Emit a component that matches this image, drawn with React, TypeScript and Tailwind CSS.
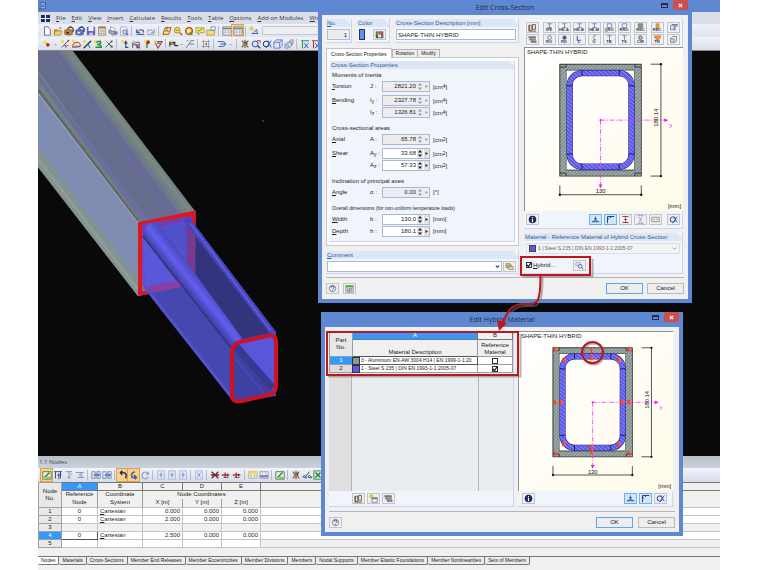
import React from "react";

/* ---------- small toolbar glyphs, drawn on a 12 x 12 grid ---------- */
const GLYPHS: Record<string, React.ReactNode> = {
  page: <path d="M3 1h4l3 3v7H3z" fill="#fff" stroke="#555a66" />,
  open: (
    <g>
      <path d="M1 4h4l1 1h4v5H1z" fill="#c9922c" />
      <path d="M3 6h8l-2 5H1z" fill="#f4cd5c" stroke="#9c7422" strokeWidth=".6" />
      <path d="M7 3q2-2 3 0" fill="none" stroke="#2b5bb5" />
    </g>
  ),
  boxTan: (
    <g>
      <path d="M1 5l4-1 5 1v5l-4 1-5-1z" fill="#c58a36" stroke="#4d3514" strokeWidth=".7" />
      <path d="M4 3l4-2 3 2v4" fill="none" stroke="#5a3d12" strokeWidth="1.5" />
      <path d="M3 7h3v2H3z" fill="#3a2a16" />
    </g>
  ),
  boxBlue: (
    <g>
      <path d="M1 5l4-1 5 1v5l-4 1-5-1z" fill="#5c7bcb" stroke="#1d2c63" strokeWidth=".7" />
      <path d="M4 3l4-2 3 2v4" fill="none" stroke="#24376f" strokeWidth="1.5" />
      <path d="M3 7h3v2H3z" fill="#e6ecff" />
    </g>
  ),
  save: (
    <g>
      <path d="M1 1h10v10H1z" fill="#6a62b8" />
      <path d="M3 1h6v5H3z" fill="#f3f3fb" />
      <path d="M4 8h4v3H4z" fill="#cfd0e8" />
    </g>
  ),
  report: (
    <g>
      <path d="M2 1h8v10H2z" fill="#f5efe2" stroke="#7b654b" strokeWidth=".8" />
      <path d="M2 1h8v2H2z" fill="#a97d4a" />
      <path d="M3 5h6M3 7h6M3 9h6" stroke="#90887c" strokeWidth=".8" />
    </g>
  ),
  print: (
    <g>
      <path d="M3 1l5 2v4L3 5z" fill="#fff" stroke="#666" strokeWidth=".6" />
      <path d="M1 5l4 1 6 1v3l-5 1-5-3z" fill="#a6a9b6" stroke="#555" strokeWidth=".6" />
      <path d="M7 9l3-1" stroke="#6b59c7" strokeWidth="1.5" />
    </g>
  ),
  preview: (
    <g>
      <path d="M2 1h6l2 2v8H2z" fill="#f2f4fa" stroke="#7a7f8d" strokeWidth=".7" />
      <circle cx="7" cy="7" r="2.5" fill="#c9dcf8" stroke="#4b628d" />
      <path d="M9 9l2 2" stroke="#4b628d" strokeWidth="1.4" />
    </g>
  ),
  undo: <path d="M2 4v4h4M2 8q3-5 8-3v3M2 10h9" fill="none" stroke="#2e4b86" strokeWidth="1.2" />,
  redo: <path d="M10 4v4H6M10 8Q7 3 2 5v3M1 10h9" fill="none" stroke="#8d9bb7" strokeWidth="1.2" />,
  plane: (
    <g>
      <path d="M4 2h7L8 10H1z" fill="#f7ef62" stroke="#b0292a" />
      <path d="M6 1v5M3 6h6" stroke="#333" strokeWidth=".7" />
    </g>
  ),
  lens: (
    <g>
      <circle cx="5" cy="5" r="3.5" fill="#f5e34b" stroke="#ad7c1e" />
      <path d="M8 8l3 3" stroke="#b03434" strokeWidth="1.5" />
      <path d="M3 5h4" stroke="#5a6cc0" />
    </g>
  ),
  wheel: (
    <g>
      <circle cx="6" cy="6" r="4" fill="#f6e14e" stroke="#c03a34" strokeWidth="1.6" />
      <path d="M6 6l4 5" stroke="#31904a" strokeWidth="1.4" />
      <circle cx="6" cy="6" r="1.3" fill="#fff" />
    </g>
  ),
  note: (
    <g>
      <path d="M1 2h10v6H6l-2 3V8H1z" fill="#f4ec5a" stroke="#867e24" strokeWidth=".7" />
      <path d="M3 5l2 1 4-3" fill="none" stroke="#444" strokeWidth=".8" />
    </g>
  ),
  folder: (
    <g>
      <path d="M1 5h9v6H1z" fill="#f4dd6c" stroke="#8d7a2c" strokeWidth=".7" />
      <path d="M6 1h5v4H6z" fill="#fff" stroke="#4968ac" strokeWidth=".8" />
    </g>
  ),
  table: (
    <g>
      <path d="M1 1h10v10H1z" fill="#f6f7fa" stroke="#6b6f7c" strokeWidth=".9" />
      <path d="M1 3h10" stroke="#727a91" strokeWidth="1.8" />
      <path d="M1 6h10M1 8h10M4 3v8M8 3v8" stroke="#9499a8" strokeWidth=".6" />
    </g>
  ),
  star: (
    <g>
      <circle cx="3" cy="3" r="2" fill="#f2e238" stroke="#b29a22" strokeWidth=".5" />
      <path d="M3 9h8M5 9l4-5 1 5" fill="none" stroke="#3c5690" />
    </g>
  ),
  node: (
    <g>
      <circle cx="4" cy="4" r="2" fill="#f2e238" />
      <circle cx="7" cy="7" r="2.2" fill="#c32323" />
    </g>
  ),
  line: (
    <g>
      <circle cx="3" cy="3" r="2" fill="#efe23c" />
      <path d="M2 10l8-8" stroke="#3b5c9c" strokeWidth="1.2" />
      <path d="M7 7v4M5 8h5" stroke="#bb2c2c" strokeWidth=".9" />
      <circle cx="10" cy="2" r="1" fill="#b72222" />
    </g>
  ),
  arc: (
    <g>
      <circle cx="3" cy="3" r="2" fill="#efe23c" />
      <path d="M2 10q0-6 5-6t4 5z" fill="none" stroke="#bb2c2c" strokeWidth="1.2" />
      <path d="M4 8h6v2H4z" fill="#6c8a4c" />
    </g>
  ),
  member: (
    <g>
      <circle cx="3" cy="3" r="2" fill="#efe23c" />
      <path d="M2 11l9-9" stroke="#273d74" strokeWidth="1.8" />
      <path d="M7 6l3 5" stroke="#3f8e4e" strokeWidth="1.3" />
    </g>
  ),
  green: (
    <g>
      <circle cx="3" cy="3" r="2" fill="#efe23c" />
      <path d="M4 4q6-3 5 1l-4 2q5-1 5 3H3" fill="none" stroke="#2b8e3c" strokeWidth="1.8" />
    </g>
  ),
  cross: (
    <g>
      <path d="M2 2l8 8M10 2l-8 8" stroke="#3b567f" strokeWidth="1.1" />
      <circle cx="3" cy="3" r="1.5" fill="#efe23c" />
      <circle cx="9" cy="9" r="1.5" fill="#3b8c45" />
      <circle cx="9" cy="3" r="1.2" fill="#b62b2b" />
    </g>
  ),
  support: (
    <g>
      <circle cx="3" cy="3" r="2" fill="#efe23c" />
      <path d="M7 2v8M5 5h4M6 10h4" stroke="#2d56a2" strokeWidth="1.4" />
      <circle cx="7" cy="4" r="1.3" fill="#b72222" />
    </g>
  ),
  frame: (
    <g>
      <path d="M2 11V4h8v7M2 4l8 7M2 7h8" fill="none" stroke="#365194" />
      <path d="M7 6l4 5H6z" fill="#b33a48" />
      <circle cx="3" cy="3" r="1.8" fill="#efe23c" />
    </g>
  ),
  load: (
    <g>
      <path d="M6 5v6" stroke="#24913b" strokeWidth="1.6" />
      <circle cx="7" cy="4" r="2.4" fill="#b3272d" />
      <circle cx="4" cy="3" r="1.8" fill="#efe23c" />
    </g>
  ),
  loads: (
    <g>
      <path d="M2 3h9L6 11z" fill="none" stroke="#aa3b3b" strokeWidth="1.3" />
      <path d="M5 5h4" stroke="#3b65b5" strokeWidth="1.6" />
      <circle cx="3" cy="3" r="1.8" fill="#efe23c" />
    </g>
  ),
  dims: (
    <g>
      <path d="M1 9V4h6v4h4M1 6h5" fill="none" stroke="#2a2d33" strokeWidth="1.4" />
      <circle cx="3" cy="3" r="1.6" fill="#e7db49" />
    </g>
  ),
  guide: <path d="M1 11l4-5 2-4h4M5 6h6M4 2H2" fill="none" stroke="#697794" strokeWidth="1.1" />,
  grid: (
    <g>
      <path d="M3 1v10M9 1v10M1 3h10M1 9h10" stroke="#7c8493" strokeWidth=".8" />
      <path d="M5 6l2-2v4z" fill="#a33" />
    </g>
  ),
  route: <path d="M1 3h5q4 0 4 3t-4 3H2M4 6h7" fill="none" stroke="#49649f" strokeWidth="1.2" />,
  bug: (
    <g>
      <path d="M2 2l8 8M10 2l-8 8M6 1v10" stroke="#77523a" strokeWidth="1.4" />
      <circle cx="6" cy="6" r="3" fill="#9d8352" />
      <path d="M5 4h3v3" fill="none" stroke="#3d352b" />
    </g>
  ),
  zoom: (
    <g>
      <circle cx="5" cy="6" r="3.5" fill="#dbe7fb" stroke="#33559d" strokeWidth="1.2" />
      <path d="M8 8l3 3" stroke="#33456f" strokeWidth="1.6" />
      <path d="M7 2h4v3" fill="none" stroke="#bb3131" strokeWidth="1.1" />
    </g>
  ),
  zoomX: (
    <g>
      <circle cx="5" cy="6" r="3.5" fill="#dbe7fb" stroke="#25365f" strokeWidth="1.2" />
      <path d="M7 2l4 8M11 2L5 11" stroke="#2f55c4" strokeWidth="1.2" />
    </g>
  ),
  cube: (
    <g>
      <path d="M1 4h7v7H1zM1 4l3-3h7v7l-3 3M8 4l3-3" fill="#dbe6fa" stroke="#4c68b4" strokeWidth=".9" />
    </g>
  ),
  cubes: <path d="M1 7h4v4H1zM1 7l3-3h5v4l-3 3M6 4l2-3h3v4l-2 3" fill="#cdd7ea" stroke="#6e7da6" strokeWidth=".9" />,
  axis: (
    <g>
      <path d="M1 2h10M3 2v9" stroke="#2b9a45" strokeWidth="1.3" />
      <path d="M5 5l5 6M10 5l-5 6" stroke="#3a57bd" strokeWidth="1.2" />
    </g>
  ),
  axisR: (
    <g>
      <path d="M1 2h10M3 2v9" stroke="#b83434" strokeWidth="1.3" />
      <path d="M5 5l5 6M10 5l-5 6" stroke="#3a57bd" strokeWidth="1.2" />
    </g>
  ),
  tableEdit: (
    <g>
      <path d="M1 2h10v9H1z" fill="#eef4e4" stroke="#4b7245" />
      <path d="M3 9l6-6" stroke="#398a3f" strokeWidth="2" />
      <path d="M5 8h5v3H5z" fill="#8fbf68" />
    </g>
  ),
  cols: <path d="M1 2h10M3 2v8M9 2v8M5 6h5M7 4v7" fill="none" stroke="#40537f" strokeWidth="1.2" />,
  colsDown: <path d="M2 2h8M6 2v8M4 8l2 2 2-2M8 5h2" fill="none" stroke="#8190b0" strokeWidth="1.1" />,
  colsWide: <path d="M1 3h9M3 9h8M10 3L5 6h3v3" fill="none" stroke="#8190b0" strokeWidth="1.1" />,
  arrows: (
    <g>
      <path d="M1 2h4v8H1zM7 2h4v8H7z" fill="#dfe8f8" stroke="#53698d" strokeWidth=".8" />
      <path d="M3 6h7M8 4l2 2-2 2" fill="none" stroke="#2c55b8" strokeWidth="1.2" />
    </g>
  ),
  turnL: <path d="M9 10q3-6-3-7H3M5 1L3 3l2 3" fill="none" stroke="#27345c" strokeWidth="1.8" />,
  turnR: <path d="M7 2Q1 4 4 9h4M6 6l3 3-2 2" fill="none" stroke="#3b59a8" strokeWidth="1.8" />,
  refresh: <path d="M10 5a4 4 0 1 0 0 3M10 2v3H7" fill="none" stroke="#8a9bb9" strokeWidth="1.3" />,
  cell: (
    <g>
      <path d="M2 1h8v10H2z" fill="#e4ebf8" stroke="#9fb0cf" />
      <path d="M6 3v6M4 6h4" stroke="#7791c4" strokeWidth="1.2" />
    </g>
  ),
  cellX: (
    <g>
      <path d="M2 1h8v10H2z" fill="#e4ebf8" stroke="#9fb0cf" />
      <path d="M4 3l4 6M8 3L4 9" stroke="#7791c4" strokeWidth="1" />
    </g>
  ),
  del: <path d="M2 2l8 8M10 2l-8 8M1 6h10" stroke="#7a2730" strokeWidth="1.7" />,
  arrowR: (
    <g>
      <path d="M1 6h9M5 3v6" stroke="#b72e34" strokeWidth="1.6" />
      <path d="M8 4v4M3 9h6" stroke="#333c4c" strokeWidth=".9" />
    </g>
  ),
  yellowTable: (
    <g>
      <path d="M1 2h10v8H1z" fill="#f7f7ef" stroke="#9a9a7b" strokeWidth=".8" />
      <path d="M1 2h10v3H1z" fill="#eede4c" />
      <path d="M4 5v5M8 5v5M1 7h10" stroke="#999" strokeWidth=".6" />
    </g>
  ),
  blueTable: (
    <g>
      <path d="M1 2h10v8H1z" fill="#e9ecfa" stroke="#8589b0" strokeWidth=".8" />
      <path d="M1 6h10v3H1z" fill="#8587cf" />
      <path d="M4 2v8M8 2v8" stroke="#999" strokeWidth=".6" />
    </g>
  ),
  appMark: (
    <g>
      <path d="M3 1h7v8H3z" fill="#9db6e2" stroke="#2d518f" />
      <path d="M4 4h5M4 6h5" stroke="#2d518f" />
      <path d="M1 8h4v3H1z" fill="#3f7f6a" />
    </g>
  ),
  books: (
    <g>
      <path d="M1 3h4v7H1zM6 2h4v7H6z" fill="#e9dfd0" stroke="#3d3a3a" strokeWidth=".9" />
      <path d="M2 3v7M1 11h10" stroke="#6d4b2b" />
    </g>
  ),
  glasses: <path d="M1 8q2-3 4 0t-4 0M7 8q2-3 4 0t-4 0M5 7l4-5" fill="none" stroke="#3b4669" strokeWidth="1.2" />,
  excel: (
    <g>
      <path d="M1 1h10v10H1z" fill="#d9efd9" stroke="#2b7c3b" />
      <path d="M3 3l6 6M9 3L3 9" stroke="#24813a" strokeWidth="1.7" />
    </g>
  ),
  shade: (
    <g>
      <path d="M1 2h9v2H1zM2 5h8v2H2zM4 8h7v2H4z" fill="#8b8d94" stroke="#444" strokeWidth=".5" />
      <path d="M6 5h3v2H6z" fill="#d98e36" />
    </g>
  ),
  ibeam: <path d="M3 1h6M3 6h6M6 1v5" stroke="#6178b4" strokeWidth="1" />,
  boxSec: <path d="M3 1h6v5H3z" fill="none" stroke="#6178b4" strokeWidth="1" />,
  ring: <circle cx="6" cy="3.5" r="2.5" fill="none" stroke="#6178b4" strokeWidth="1.2" />,
  disc: <circle cx="6" cy="3.5" r="2.8" fill="#3e5bb2" />,
  angle: <path d="M3 1v6h5" fill="none" stroke="#3e5bb2" strokeWidth="1.4" />,
  channel: <path d="M8 1H5v5h3" fill="none" stroke="#6178b4" strokeWidth="1" />,
  tee: <path d="M3 1h6M6 1v6" stroke="#6178b4" strokeWidth="1" />,
  steel: <path d="M3 1h6v5H3z" fill="#8d9196" stroke="#555" strokeWidth=".7" />,
  steelRing: <circle cx="6" cy="3.5" r="2.500" fill="#b4b7bb" stroke="#555" strokeWidth="1" />,
  wood: <path d="M4 1h4v6H4z" fill="#f0a032" stroke="#bb7318" strokeWidth=".7" />,
  woodTee: <path d="M2 1h8v3H8v3H4V4H2z" fill="#e8993a" stroke="#bb7318" strokeWidth=".6" />,
  stack: (
    <g>
      <path d="M2 3h5v6H2z" fill="#d4dcef" stroke="#53618c" strokeWidth=".8" />
      <path d="M4 2h7v2H8v6" fill="none" stroke="#53618c" strokeWidth="1.1" />
    </g>
  ),
  stack2: (
    <g>
      <path d="M2 5h5v5H2z" fill="#cccfd4" stroke="#666b77" strokeWidth=".8" />
      <path d="M2 5l3-3h5v6l-3 2" fill="none" stroke="#666b77" strokeWidth="1" />
    </g>
  ),
  palette: (
    <g>
      <path d="M1 2h10v9H1z" fill="#57513f" />
      <path d="M2 3h4v4H2z" fill="#58b257" />
      <path d="M6 2h4v4H6z" fill="#df5348" />
      <path d="M4 6h4v4H4z" fill="#f0e3ae" />
      <path d="M8 6h3v4H8z" fill="#5a70c8" />
    </g>
  ),
  help: (
    <g>
      <circle cx="6" cy="6" r="4.3" fill="#eef1f7" stroke="#50607f" strokeWidth=".9" />
      <path d="M4 5q0-2 2-2t2 1.500-2 2.500M6 8.500v1" fill="none" stroke="#26417c" strokeWidth="1.2" />
    </g>
  ),
  calc: (
    <g>
      <path d="M1 2h10v9H1z" fill="#dce8dc" stroke="#5d6f5d" strokeWidth=".7" />
      <path d="M1 2h10v2.500H1z" fill="#58ab4c" />
      <path d="M3 6v4M5 6h2v2H5v2h2M9 6v4" fill="none" stroke="#3d4652" strokeWidth=".8" />
    </g>
  ),
  info: (
    <g>
      <circle cx="6" cy="6" r="5" fill="#1c2a55" />
      <path d="M6 2.500v1.500M6 5v4.500" stroke="#fff" strokeWidth="1.6" />
    </g>
  ),
  stress: <path d="M1 9h10M2 9l4-2 4 2M6 7V2M4 5h4" fill="none" stroke="#2f4f92" strokeWidth="1.2" />,
  corner: <path d="M2 11V2h9M2 5h2M6 2v2" fill="none" stroke="#2b3f70" strokeWidth="1.3" />,
  redI: (
    <g>
      <path d="M2 2h8M2 10h8" stroke="#b03434" strokeWidth="1.6" />
      <path d="M6 3v6M4 6h4" stroke="#444" strokeWidth="1" />
    </g>
  ),
  grayI: <path d="M2 1h8M2 11h8M4 3q4 3 0 6M8 3q-4 3 0 6" fill="none" stroke="#7b8296" strokeWidth="1" />,
  values: <path d="M1 3h10v6H1zM3 6h2M7 6h2" fill="#efe9df" stroke="#827d74" strokeWidth="1" />,
  newItem: (
    <g>
      <path d="M4 5h7v6H4z" fill="#fff" stroke="#555e70" strokeWidth=".9" />
      <path d="M4 5h7v2H4z" fill="#6b7997" />
      <circle cx="3" cy="3" r="2.200" fill="#e9dc35" stroke="#8d8528" strokeWidth=".5" />
    </g>
  ),
  copies: (
    <g>
      <path d="M1 2h6v5H1z" fill="#d9cca0" stroke="#7d714c" strokeWidth=".7" />
      <path d="M3 4h6v4H3z" fill="#cdbd88" stroke="#7d714c" strokeWidth=".7" />
      <path d="M5 6h6v4H5z" fill="#dfd3a8" stroke="#7d714c" strokeWidth=".7" />
    </g>
  ),
  search: (
    <g>
      <path d="M1 2h6v4H1z" fill="#dfe2ea" stroke="#7c8397" strokeWidth=".7" />
      <circle cx="7" cy="7" r="2.500" fill="#cfe0fa" stroke="#3c5fa8" />
      <path d="M9 9l2 2" stroke="#34466f" strokeWidth="1.3" />
    </g>
  ),
};

function Glyph({ name, className = "size-[10px]" }: { name: string; className?: string }) {
  return (
    <svg viewBox="0 0 12 12" className={`${className} shrink-0`} aria-hidden="true">
      {GLYPHS[name]}
    </svg>
  );
}

function Tool({ name, active = false }: { name: string; active?: boolean }) {
  return (
    <button
      aria-label={name}
      className={`flex h-3 w-[11px] shrink-0 items-center justify-center ${
        active ? "bg-[#fbd08a] outline outline-[#d9a352]" : ""
      }`}
    >
      <Glyph name={name} />
    </button>
  );
}

const Sep = () => <span className="mx-[2px] h-[10px] w-px shrink-0 bg-[#b4bac9]" />;

function ToolRow({ items }: { items: string[] }) {
  return (
    <>
      {items.map((item, i) =>
        item === "|" ? <Sep key={i} /> : <Tool key={i} name={item.replace("*", "")} active={item.endsWith("*")} />
      )}
    </>
  );
}

/* ---------- dialog building blocks ---------- */
function PushIcon({
  name,
  caption,
  on = false,
}: {
  name: string;
  caption?: string;
  on?: boolean;
}) {
  return (
    <button
      aria-label={caption ?? name}
      className={`relative flex h-[11px] w-[13px] shrink-0 items-center justify-center border ${
        on ? "border-[#6fb0e8] bg-[#cfe6fb]" : "border-[#c4c4c8] bg-[#f0f0f2]"
      }`}
    >
      <Glyph name={name} className="size-[9px]" />
      {caption && (
        <span className="absolute inset-x-0 bottom-0 text-center text-[4px] leading-[4px] font-bold text-[#333a4c]">
          {caption}
        </span>
      )}
    </button>
  );
}

function Group({
  title,
  className = "",
  children,
}: {
  title: React.ReactNode;
  className?: string;
  children: React.ReactNode;
}) {
  return (
    <fieldset className={`min-w-0 border-r border-b border-[#cdd2f4] bg-[#f0f4fb] ${className}`}>
      <div className="h-2 bg-[#dce6f5] pl-px leading-[8px] text-[#2b5b93] [clip-path:polygon(0_0,calc(100%-5px)_0,100%_5px,100%_100%,0_100%)]">
        {title}
      </div>
      {children}
    </fieldset>
  );
}

function PushButton({ children, primary = false }: { children: React.ReactNode; primary?: boolean }) {
  return (
    <button
      className={`h-[11px] w-[37px] border bg-[#eeeeee] text-center leading-[9px] ${
        primary ? "border-[#5da7ee]" : "border-[#b9b9b9]"
      }`}
    >
      {children}
    </button>
  );
}

function Check({ id, checked = false }: { id: string; checked?: boolean }) {
  return (
    <span className="inline-grid size-[6px] shrink-0">
      <input
        id={id}
        aria-label={id}
        type="checkbox"
        defaultChecked={checked}
        className="peer col-start-1 row-start-1 size-[6px] appearance-none border border-[#333] bg-white"
      />
      <svg
        viewBox="0 0 6 6"
        className="pointer-events-none invisible col-start-1 row-start-1 size-[6px] peer-checked:visible"
      >
        <path d="M1 3l1.500 1.500L5 1" fill="none" stroke="#111" strokeWidth="1.2" />
      </svg>
    </span>
  );
}

function Field({
  label,
  sym,
  sub,
  value,
  unit,
  sup,
  editable = false,
  className = "",
}: {
  label?: string;
  sym: string;
  sub?: string;
  value: string;
  unit: string;
  sup?: string;
  editable?: boolean;
  className?: string;
}) {
  const id = `field-${sym}${sub ?? ""}`;
  return (
    <div className={`flex h-3 items-center ${className}`}>
      <span className="w-[38px] first-letter:underline">{label}</span>
      <label htmlFor={id} className="w-3">
        {sym}
        {sub && <sub className="text-[5px]">{sub}</sub>} :
      </label>
      <span
        className={`flex h-[11px] w-12 items-center border border-[#a9b9d2] ${editable ? "bg-white" : "bg-[#ededef]"}`}
      >
        <input
          id={id}
          defaultValue={value}
          readOnly={!editable}
          className="w-0 min-w-0 flex-1 bg-transparent text-right leading-[9px]"
        />
        <button
          aria-label={`Step ${sym}`}
          className={`ml-px flex h-[9px] w-[6px] items-center justify-center ${editable ? "bg-[#e3e3e6]" : ""}`}
        >
          <svg viewBox="0 0 6 9" className="h-[9px] w-[6px]">
            <path d="M3 1L5 3.500H1zM3 8L5 5.500H1z" fill={editable ? "#222" : "#999"} />
          </svg>
        </button>
        <button
          aria-label={`Choose ${sym}`}
          className={`ml-px flex h-[9px] w-[5px] items-center justify-center ${editable ? "bg-[#e3e3e6]" : ""}`}
        >
          <svg viewBox="0 0 5 9" className="h-[9px] w-[5px]">
            <path d="M1.500 3L4 4.500 1.500 6z" fill={editable ? "#222" : "#999"} />
          </svg>
        </button>
      </span>
      <span className="ml-[3px]">
        [{unit}
        {sup && <span className="align-[1px] text-[5px]">{sup}</span>}]
      </span>
    </div>
  );
}

/* Hybrid cross-section: aluminium box around a rounded steel tube */
function SectionDrawing({ id, marks = false }: { id: string; marks?: boolean }) {
  const markers: [number, number, string][] = [
    [38, 18, "1"], [115, 18, "1"], [76, 20, "1"], [76, 27, "2"],
    [47, 29, "2"], [104, 29, "2"], [38, 73, "1"], [44, 73, "2"],
    [108, 73, "2"], [115, 73, "1"], [47, 117, "2"], [104, 117, "2"],
    [38, 127, "1"], [115, 127, "1"], [76, 120, "2"], [76, 126, "1"],
  ];
  return (
    <svg viewBox="0 0 161 166" className="block h-auto w-full">
      <defs>
        <pattern id={`${id}-alu`} width="2.500" height="2.500" patternUnits="userSpaceOnUse" patternTransform="rotate(45)">
          <rect width="2.500" height="2.500" fill="#9dabaa" />
          <rect width=".8" height="2.500" fill="#71807e" />
        </pattern>
        <pattern id={`${id}-steel`} width="3" height="3" patternUnits="userSpaceOnUse" patternTransform="rotate(-50)">
          <rect width="3" height="3" fill="#5a56f0" />
          <rect width=".9" height="3" fill="#8e8cf8" />
        </pattern>
      </defs>
      <rect x="38.500" y="19.500" width="76.500" height="107.500" fill="none" stroke={`url(#${id}-alu)`} strokeWidth="6.500" />
      <rect x="35.500" y="16.500" width="83" height="114" fill="none" stroke="#222" strokeWidth=".8" />
      <rect x="42" y="22.500" width="69.500" height="102" fill="none" stroke="#333" strokeWidth=".6" />
      <path d="M35.500 19.500h6.500v-3M118.500 19.500H112v-3M35.500 127.500h6.500v3M118.500 127.500H112v3" fill="none" stroke="#222" strokeWidth=".8" />
      <rect x="45.500" y="25.500" width="63" height="95.500" rx="12.500" fill="none" stroke="#23236b" strokeWidth="6.400" />
      <rect x="45.500" y="25.500" width="63" height="95.500" rx="12.500" fill="none" stroke={`url(#${id}-steel)`} strokeWidth="5.400" />
      <path d="M58 22.500v6M96 22.500v6M58 118v6M96 118v6M42.500 38.500h6M105.500 38.500h6M42.500 108h6M105.500 108h6" stroke="#14143f" strokeWidth=".9" />
      <path d="M77 73.500H143M77 73.500V141" fill="none" stroke="#f430f4" strokeWidth=".8" strokeDasharray="5 1.500 1 1.500" />
      <path d="M142 71.500l4 2-4 2zM75 139h4l-2 4z" fill="#f414f4" />
      <circle cx="77" cy="73.500" r="1.100" fill="#f414f4" />
      <text x="147" y="80" fontSize="6" fill="#f414f4">y</text>
      <path d="M128 16.500h11M128 130.500h11M138.500 16.500v114M35.500 140v10M118.500 140v10M35.500 149.500h83" fill="none" stroke="#222" strokeWidth=".8" />
      <g fill="#111">
        <circle cx="138.500" cy="16.500" r="1.200" />
        <circle cx="138.500" cy="130.500" r="1.200" />
        <circle cx="35.500" cy="149.500" r="1.200" />
        <circle cx="118.500" cy="149.500" r="1.200" />
        <text x="77" y="148" fontSize="6" textAnchor="middle">130</text>
        <text fontSize="6" textAnchor="middle" transform="translate(136 71) rotate(-90)">180.14</text>
        <text x="159" y="163" fontSize="6" textAnchor="end">[mm]</text>
      </g>
      {marks &&
        markers.map(([x, y, t], i) => (
          <text key={i} x={x} y={y + 2} fontSize="6" fontWeight="bold" textAnchor="middle" fill="#ff4a1c" stroke="#ff4a1c" strokeWidth=".7">
            {t}
          </text>
        ))}
    </svg>
  );
}

function Dialog({
  title,
  className,
  children,
}: {
  title: string;
  className: string;
  children: React.ReactNode;
}) {
  return (
    <section className={`absolute border-x-4 border-b-4 border-[#5f88d3] bg-[#5f88d3] ${className}`}>
      <header className="relative flex h-[15px] items-center justify-center font-['Open_Sans',sans-serif] text-[7px] text-[#1d2940]">
        <h2>{title}</h2>
        <div className="absolute top-0 right-0 flex items-center gap-[5px]">
          <button aria-label="Maximize" className="h-[5px] w-[7px] border border-t-2 border-[#1f2c4c]" />
          <button aria-label="Close" className="flex h-[10px] w-[15px] items-center justify-center bg-[#c9504e]">
            <svg viewBox="0 0 6 6" className="size-[5px]">
              <path d="M1 1l4 4M5 1L1 5" stroke="#fff" strokeWidth="1.4" />
            </svg>
          </button>
        </div>
      </header>
      <div className="bg-[#f0f0f0]">{children}</div>
    </section>
  );
}

function SectionToolbar() {
  const rows: [string, string?][][] = [
    [["books"], ["ibeam", "IPE"], ["ibeam", "HE-A"], ["ibeam", "HE-B"], ["ibeam", "HE-M"], ["boxSec", "QRO"], ["boxSec", "RRO"], ["steel", "REC"], ["wood", "REC"], ["stack"]],
    [["shade"], ["ring", "RO"], ["disc", "RD"], ["angle", "L"], ["channel", "U"], ["tee", "TB"], ["tee", "TS"], ["steelRing", "CIR"], ["woodTee", "TH"], ["stack2"]],
  ];
  return (
    <div className="flex flex-col gap-px border-r border-[#cdd2f4] bg-[#f0f4fb] px-[2px] pt-[3px] pb-[2px]">
      {rows.map((row, r) => (
        <div key={r} className="flex justify-between">
          <PushIcon name={row[0][0]} />
          <div className="flex gap-[2px]">
            {row.slice(1, 7).map(([n, c], i) => (
              <PushIcon key={i} name={n} caption={c} />
            ))}
          </div>
          {row.slice(7).map(([n, c], i) => (
            <PushIcon key={i} name={n} caption={c} />
          ))}
        </div>
      ))}
    </div>
  );
}

const Heading = ({ first = false, children }: { first?: boolean; children: React.ReactNode }) => (
  <h3 className={`h-[9px] leading-[9px] ${first ? "mt-[2px]" : "mt-[6px]"}`}>{children}</h3>
);

function EditCrossSection() {
  return (
    <Dialog title="Edit Cross-Section" className="top-0 left-[280px] w-[374px]">
      <div className="flex gap-[5px] px-[4px] pt-1">
        <div className="w-[193px] shrink-0">
          <div className="flex gap-[5px]">
            <Group title={<label htmlFor="no" className="block first-letter:underline">No.</label>} className="w-[26px]">
              <input id="no" readOnly defaultValue="1" className="m-px mt-[2px] block h-[11px] w-[23px] border border-[#b3bdcc] bg-[#ededef] pr-[2px] text-right" />
            </Group>
            <Group title="Color" className="w-[33px]">
              <div className="flex items-center justify-between p-[2px] pr-[3px]">
                <span className="h-[11px] w-[6px] border border-[#26375c] bg-[#5f8ef5]" />
                <PushIcon name="palette" />
              </div>
            </Group>
            <Group title={<label htmlFor="desc">Cross-Section Description [mm]</label>} className="flex-1">
              <input id="desc" defaultValue="SHAPE-THIN HYBRID" className="m-px mt-[2px] mb-[2px] block h-[11px] w-[120px] border border-[#a9b9d2] bg-white pl-px" />
            </Group>
          </div>
          <div role="tablist" className="mt-[5px] flex items-end text-[5px]">
            <button role="tab" className="relative z-10 -mb-px h-[10px] border border-b-0 border-[#c4c4c8] bg-white px-1 leading-[8px]">Cross-Section Properties</button>
            <button role="tab" className="h-2 border border-b-0 border-[#b4b4b8] bg-[#eeeeee] px-[3px] leading-[7px]">Rotation</button>
            <button role="tab" className="h-2 border border-b-0 border-l-0 border-[#b4b4b8] bg-[#eeeeee] px-[3px] leading-[7px]">Modify</button>
          </div>
          <div className="border border-[#c9c9cd] bg-[#fcfcfd] p-[3px]">
            <Group title="Cross-Section Properties" className="h-[181px]">
              <div className="pl-[2px]">
                <Heading first>Moments of inertia</Heading>
                <Field label="Torsion" sym="J" value="2821.20" unit="cm" sup="4" />
                <Field label="Bending" sym="I" sub="y" value="2327.78" unit="cm" sup="4" className="mt-[2px]" />
                <Field sym="I" sub="z" value="1326.81" unit="cm" sup="4" />
                <Heading>Cross-sectional areas</Heading>
                <Field label="Axial" sym="A" value="65.78" unit="cm" sup="2" />
                <Field label="Shear" sym="A" sub="y" value="33.68" unit="cm" sup="2" editable className="mt-[2px]" />
                <Field sym="A" sub="z" value="57.33" unit="cm" sup="2" editable />
                <Heading>Inclination of principal axes</Heading>
                <Field label="Angle" sym="α" value="0.00" unit="°" />
                <Heading>
                  <span className="text-[5px]">Overall dimensions (for non-uniform temperature loads)</span>
                </Heading>
                <Field label="Width" sym="b" value="130.0" unit="mm" editable />
                <Field label="Depth" sym="h" value="180.1" unit="mm" editable />
              </div>
            </Group>
          </div>
          <Group title={<label htmlFor="comment" className="block first-letter:underline">Comment</label>} className="mt-[5px]">
            <div className="flex items-center justify-between p-px pt-[2px] pr-[2px]">
              <span className="relative">
                <select id="comment" className="block h-[11px] w-[175px] appearance-none border border-[#a9b9d2] bg-white">
                  <option></option>
                </select>
                <svg viewBox="0 0 6 6" className="pointer-events-none absolute top-[3px] right-[2px] size-[5px]">
                  <path d="M1 2l2 2 2-2" fill="none" stroke="#333" strokeWidth="1.3" />
                </svg>
              </span>
              <PushIcon name="copies" />
            </div>
          </Group>
        </div>
        <div className="min-w-0 flex-1 pr-px">
          <SectionToolbar />
          <div className="relative border-t border-l border-[#8c8f98] bg-linear-to-br from-white to-[#fffbe9]">
            <span className="absolute top-0 left-[2px] leading-[8px]">SHAPE-THIN HYBRID</span>
            <SectionDrawing id="a" />
          </div>
          <div className="flex justify-between border-r border-b border-[#cdd2f4] bg-[#f0f4fb] px-[2px] py-[3px]">
            <PushIcon name="info" />
            <div className="flex gap-[2px]">
              <PushIcon name="stress" on />
              <PushIcon name="corner" on />
              <PushIcon name="redI" />
              <PushIcon name="grayI" />
              <PushIcon name="values" />
              <span className="w-px" />
              <PushIcon name="zoomX" />
            </div>
          </div>
          <Group title="Material - Reference Material of Hybrid Cross-Section" className="mt-1 h-[41px]">
            <div className="mx-[2px] mt-[2px] flex h-[11px] items-center border border-[#dedfe3] bg-[#f4f4f5] pl-[2px]">
              <span className="size-[7px] border border-[#444] bg-[#5c58ec]" />
              <select disabled aria-label="Material" className="ml-[2px] flex-1 appearance-none text-[5px] text-[#66666c]">
                <option>1 | Steel S 235 | DIN EN 1993-1-1:2005-07</option>
              </select>
              <svg viewBox="0 0 6 6" className="mr-[2px] size-[5px]">
                <path d="M1 2l2 2 2-2" fill="none" stroke="#999" strokeWidth="1.2" />
              </svg>
            </div>
            <div className="mt-[6px] flex items-center pl-[2px]">
              <Check id="hybrid" checked />
              <label htmlFor="hybrid" className="ml-px block w-[40px] first-letter:underline">Hybrid...</label>
              <PushIcon name="search" />
            </div>
          </Group>
        </div>
      </div>
      <footer className="mx-[4px] mt-[3px] flex items-center justify-between border-t border-[#b5b5b5] pt-[5px] pb-[5px]">
        <div className="flex gap-1">
          <PushIcon name="help" />
          <PushIcon name="calc" />
        </div>
        <div className="flex gap-1">
          <PushButton primary>OK</PushButton>
          <PushButton>Cancel</PushButton>
        </div>
      </footer>
    </Dialog>
  );
}

function EditHybridMaterial() {
  return (
    <Dialog title="Edit Hybrid Material" className="top-[312px] left-[283px] w-[362px]">
      <div className="flex gap-1 px-1 pt-1">
        <div className="flex w-[185px] shrink-0 flex-col border-r border-b border-[#cdd2f4] bg-[#f0f4fb]">
          <table className="w-full table-fixed border-collapse text-center leading-[7px]">
            <colgroup>
              <col className="w-[23px]" />
              <col />
              <col className="w-[35px]" />
            </colgroup>
            <thead className="bg-[#f0f0f0]">
              <tr className="h-[7px]">
                <th rowSpan={2} className="border border-[#9c9c9c] bg-[#e8e8e8] font-normal">Part<br />No.</th>
                <th className="border border-[#777] bg-[#3399ff] font-normal text-white">A</th>
                <th className="border border-[#777] font-normal">B</th>
              </tr>
              <tr className="h-[17px] align-bottom">
                <th className="border-x border-[#9c9c9c] font-normal">Material Description</th>
                <th className="border-x border-[#9c9c9c] font-normal">Reference<br />Material</th>
              </tr>
            </thead>
            <tbody>
              <tr className="h-2">
                <th className="border border-[#9c9c9c] bg-[#3399ff] font-normal text-white">1</th>
                <td className="border border-[#555] bg-white">
                  <div className="flex items-center text-left text-[5px] whitespace-nowrap">
                    <span className="mr-[2px] size-[6px] shrink-0 bg-[#8a9896] outline outline-[#333]" />
                    3 - Aluminium EN-AW 3004 H14 | EN 1999-1-1:20
                  </div>
                </td>
                <td className="border border-[#9c9c9c] bg-white leading-[0]"><Check id="reference-1" /></td>
              </tr>
              <tr className="h-2">
                <th className="border border-[#9c9c9c] bg-[#dcdcdc] font-normal">2</th>
                <td className="border border-[#9c9c9c] bg-white">
                  <div className="flex items-center text-left text-[5px] whitespace-nowrap">
                    <span className="mr-[2px] size-[6px] shrink-0 bg-[#5c58ec] outline outline-[#333]" />
                    1 - Steel S 235 | DIN EN 1993-1-1:2005-07
                  </div>
                </td>
                <td className="border border-[#9c9c9c] bg-white leading-[0]"><Check id="reference-2" checked /></td>
              </tr>
            </tbody>
          </table>
          <div className="flex flex-1 bg-[#e8eeef]">
            <span className="w-[23px] border-r border-[#b5b5b5] bg-[#dfdfdf]" />
            <span className="flex-1" />
            <span className="w-[35px] border-l border-[#b5b5b5]" />
          </div>
          <div className="flex gap-[2px] py-[2px] pl-[23px]">
            <PushIcon name="books" />
            <PushIcon name="newItem" />
            <PushIcon name="shade" />
          </div>
        </div>
        <div className="min-w-0 flex-1 pr-[2px]">
          <div className="relative border-t border-l border-[#8c8f98] bg-linear-to-br from-white to-[#fffbe9]">
            <span className="absolute top-0 left-[2px] leading-[8px]">SHAPE-THIN HYBRID</span>
            <SectionDrawing id="b" marks />
          </div>
          <div className="flex justify-between border-r border-b border-[#cdd2f4] bg-[#f0f4fb] py-[2px] pr-[5px] pl-[4px]">
            <PushIcon name="info" />
            <div className="flex gap-[2px]">
              <PushIcon name="stress" on />
              <PushIcon name="corner" on />
              <PushIcon name="zoomX" />
            </div>
          </div>
        </div>
      </div>
      <footer className="mx-1 mt-1 flex items-center justify-between border-t border-[#b5b5b5] pt-[5px] pb-1">
        <PushIcon name="help" />
        <div className="flex gap-[5px]">
          <PushButton primary>OK</PushButton>
          <PushButton>Cancel</PushButton>
        </div>
      </footer>
    </Dialog>
  );
}

/* Rendered beam: outer aluminium box with the steel tube sliding out of it */
function ModelView() {
  return (
    <svg viewBox="38 51 682 405" preserveAspectRatio="xMinYMin slice" className="block h-[405px] w-full bg-[#090909]">
      <defs>
        <linearGradient id="ridge" gradientUnits="userSpaceOnUse" x1="180" y1="286" x2="195" y2="274">
          <stop offset="0" stopColor="#3a3a92" />
          <stop offset=".25" stopColor="#4848ba" />
          <stop offset=".6" stopColor="#625ff0" />
          <stop offset="1" stopColor="#4c4bc4" />
        </linearGradient>
      </defs>
      <polygon points="38,51 73,51 195,211 195,285 138,296 38,167" fill="#74827f" />
      <polygon points="38,70 38,51 61,51 182,213 146,220" fill="#656c8c" />
      <polygon points="38,74 38,80 142,222 149,220" fill="#6c6f9e" />
      <polygon points="49,51 54,51 175,215 168,216" fill="#686a98" />
      <polygon points="58,51 62,51 184,213 179,214" fill="#6f7595" />
      <polygon points="66,51 70,51 192,211 188,212" fill="#7a8884" />
      <polygon points="38,92 138,223 138,296 38,167" fill="#808db2" />
      <polygon points="38,147 138,280 138,296 38,167" fill="#84938f" />
      <polygon points="38,157 38,161 138,292 138,287" fill="#8f9d99" />
      <path d="M38 90L138 221" stroke="#5f6a70" strokeWidth="3" />
      <path d="M38 93L138 223" stroke="#a7b2b6" strokeWidth="1" />
      <polygon points="138,222 195.500,211 195.500,284 138,296" fill="#5655d6" />
      <polygon points="187,214 195.500,211 195.500,284 187,287" fill="#7c3b92" />
      <polygon points="142,290 195,279 195,284 138,296" fill="#943a9c" />
      <polygon points="142,224 147,224 147,290 142,291" fill="#6c4bc6" />
      <path d="M140 294V224L193.500 213V232" fill="none" stroke="#e0161f" strokeWidth="4" />
      <path d="M139 294L160 290" stroke="#e0161f" strokeWidth="3" />
      <polygon points="142,284 146,291 142,291" fill="#6b7a78" />
      <polygon points="183,218 189,217 276,332 276,396 236,402 231,398 145,288 143,232 150,224" fill="#4747b0" />
      <polygon points="142,230 152,223 186,218 187,275 175,278" fill="#5251cc" />
      <polygon points="142,224 187,217 187,221 150,229 142,234" fill="#6f3fb0" />
      <polygon points="143,238 176,281 147,287 145,287" fill="#5a58da" />
      <polygon points="187,225 270,333 238,340 187,272" fill="#34347e" />
      <polygon points="187,219 195.500,229 195.500,284 187,287" fill="#773a90" />
      <polygon points="147,287 195.500,277 195.500,284 152,293" fill="#8a3ea6" />
      <path d="M186 219L274 334" stroke="#4946bb" strokeWidth="6" />
      <path d="M190 223L271 331" stroke="#6563ee" strokeWidth="1.200" />
      <path d="M145 287L233 399" stroke="#5452cc" strokeWidth="3" />
      <polygon points="142,233 150,222 159,224 242,338 231,349" fill="url(#ridge)" />
      <path d="M143 236L231 348" stroke="#33337e" strokeWidth="1.500" />
      <path d="M232 352q0-8 8-10l27-6q9-2 9 6v44q0 7-8 9l-26 6q-10 2-10-6z" fill="#5856da" />
      <polygon points="232,346 275,393 268,396 240,402 232,397" fill="#3f3fa0" />
      <path d="M236 346L273 388" stroke="#383891" strokeWidth="7" />
      <path d="M234 357L266 396" stroke="#4746b4" strokeWidth="2" />
      <path d="M232 352q0-8 8-10l27-6q9-2 9 6v44q0 7-8 9l-26 6q-10 2-10-6z" fill="none" stroke="#ce1226" strokeWidth="4" />
      <rect x="262" y="120" width="2" height="2" fill="#333" />
    </svg>
  );
}

const NODES = [
  ["1", "0", "Cartesian", "0.000", "0.000", "0.000"],
  ["2", "0", "Cartesian", "2.000", "0.000", "0.000"],
  ["3", "", "", "", "", ""],
  ["4", "0", "Cartesian", "2.500", "0.000", "0.000"],
  ["5", "", "", "", "", ""],
];

function NodesTable() {
  return (
    <table className="w-full table-fixed border-collapse text-center leading-[7px]">
      <colgroup>
        <col className="w-[23px]" />
        <col className="w-9" />
        <col className="w-[45px]" />
        <col className="w-10" />
        <col className="w-[39px]" />
        <col className="w-[39px]" />
        <col />
      </colgroup>
      <thead className="bg-[#f0f0f0]">
        <tr className="h-[7px]">
          <th rowSpan={3} className="border border-[#a0a0a0] bg-[#e8e8e8] font-normal">Node<br />No.</th>
          <th className="border border-[#777] bg-[#3399ff] font-normal text-white">A</th>
          {["B", "C", "D", "E"].map((c) => (
            <th key={c} className="border border-[#777] font-normal">{c}</th>
          ))}
          <th className="border-y border-[#777]" />
        </tr>
        <tr className="h-[8px]">
          <th className="border-x border-[#a0a0a0] font-normal">Reference</th>
          <th className="border-x border-[#a0a0a0] font-normal">Coordinate</th>
          <th colSpan={3} className="border-x border-[#a0a0a0] font-normal">Node Coordinates</th>
          <th />
        </tr>
        <tr className="h-[9px]">
          {["Node", "System", "X [m]", "Y [m]", "Z [m]"].map((c) => (
            <th key={c} className="border-x border-[#a0a0a0] font-normal">{c}</th>
          ))}
          <th />
        </tr>
      </thead>
      <tbody>
        {NODES.map(([no, ref, sys, x, y, z]) => (
          <tr key={no} className={`h-2 ${no === "3" ? "bg-[#f1f1f1]" : "bg-white"}`}>
            <th className={`border border-[#a0a0a0] font-normal ${no === "4" ? "bg-[#3399ff] text-white" : "bg-[#e8e8e8]"}`}>{no}</th>
            <td className={`border ${no === "4" ? "border-[#555]" : "border-[#c4c4c4]"}`}>{ref}</td>
            <td className="border border-[#c4c4c4] pl-[2px] text-left first-letter:underline">{sys}</td>
            {[x, y, z].map((v, i) => (
              <td key={i} className="border border-[#c4c4c4] pr-[2px] text-right">{v}</td>
            ))}
            <td className={`border-y border-[#c4c4c4] ${no === "5" ? "bg-[#f1f1f1]" : ""}`} />
          </tr>
        ))}
      </tbody>
    </table>
  );
}

const TABS = [
  "Nodes", "Materials", "Cross-Sections", "Member End Releases", "Member Eccentricities", "Member Divisions",
  "Members", "Nodal Supports", "Member Elastic Foundations", "Member Nonlinearities", "Sets of Members",
];

const MENUS = ["File", "Edit", "View", "Insert", "Calculate", "Results", "Tools", "Table", "Options", "Add-on Modules", "Window"];

export default function App() {
  return (
    <div className="min-h-screen bg-white pr-10 pl-[38px] [font-family:'Liberation_Sans',Arial,sans-serif] text-[6px] leading-[8px] text-[#1c1c20]">
      <main className="relative min-h-screen overflow-hidden bg-[#f0f0f0]">
        <header>
          <div className="flex h-3 items-center bg-[#5f88d3]">
            <Glyph name="appMark" className="size-[9px]" />
          </div>
          <nav className="flex h-3 items-center gap-[6px] bg-[#d9dee8] pl-[3px] font-['Open_Sans',sans-serif] text-[6px] whitespace-nowrap text-[#33353c]">
            <svg viewBox="0 0 9 7" className="h-[7px] w-[9px] shrink-0">
              <path d="M0 0h9v7H0z" fill="#1b2a5e" />
              <path d="M0 3.500h9M4.500 0v7" stroke="#e9edf7" strokeWidth="1.200" />
            </svg>
            {MENUS.map((m) => (
              <button key={m} className="shrink-0 first-letter:underline">{m}</button>
            ))}
          </nav>
          <div className="flex h-[13px] items-center overflow-hidden bg-linear-to-b from-[#eef1f7] to-[#dfe4ee] pl-[3px]">
            <ToolRow items={["page", "open", "boxTan", "boxBlue", "save", "report", "print", "preview", "|", "undo", "redo", "|", "plane", "lens", "wheel", "note", "folder", "|", "table", "table*", "|", "star"]} />
            <input aria-label="Load case" className="ml-[3px] h-[9px] w-[90px] border border-[#c5c9d2] bg-[#ededef]" />
          </div>
          <div className="flex h-[14px] items-center overflow-hidden border-b border-[#85888e] bg-linear-to-b from-[#eef1f7] to-[#dadfe9] pl-[3px]">
            <ToolRow items={["node"]} />
            <span className="w-[7px] text-center">-</span>
            <ToolRow items={["line", "arc", "member", "green", "cross", "|", "support", "frame", "load", "loads", "|", "dims"]} />
            <span className="w-[5px] text-center">-</span>
            <ToolRow items={["guide", "|", "grid", "|", "route"]} />
            <span className="w-[7px] text-center">-</span>
            <ToolRow items={["|", "bug", "zoom", "zoomX", "cube", "cubes", "|", "axis", "axisR"]} />
          </div>
        </header>
        <ModelView />
        <section>
          <h2 className="h-3 bg-linear-to-b from-[#b9bfca] to-[#ccd2dc] pl-px font-['Open_Sans',sans-serif] leading-[13px] text-[#444a55]">1.1 Nodes</h2>
          <div className="flex h-[14px] items-center bg-linear-to-b from-[#f1f4fa] to-[#d6dcea] pl-[3px]">
            <ToolRow items={["tableEdit*", "cols", "colsDown", "colsWide", "|", "arrows", "arrows", "|", "turnL*", "turnR*", "refresh", "|", "cell", "cell", "cell", "|", "cellX", "|", "del", "arrowR", "arrowR", "|", "yellowTable", "blueTable", "|", "tableEdit", "|", "bug", "glasses", "excel"]} />
          </div>
          <NodesTable />
          <div role="tablist" className="mt-[8px] flex border-t border-[#777] text-[5px] whitespace-nowrap">
            {TABS.map((t, i) => (
              <button
                key={t}
                role="tab"
                className={`h-2 rounded-b-xs border-r border-b border-[#777] px-[3px] leading-[7px] ${i === 0 ? "bg-white" : "bg-[#ececec]"}`}
              >
                {t}
              </button>
            ))}
          </div>
        </section>

        <EditCrossSection />
        <EditHybridMaterial />

        {/* callouts that connect the two dialogs */}
        <svg viewBox="0 0 682 570" className="pointer-events-none absolute top-0 left-0 h-[570px] w-[682px]">
          <g fill="none" stroke="#777" strokeOpacity=".55" strokeWidth="2">
            <path d="M484.500 276.500H554.500V259M290 376.500H482.500V334" />
            <path d="M504.500 277C504.500 301 502 306 494 306H488C476 306 472 312 466 325" />
            <circle cx="555.500" cy="354" r="10.500" />
          </g>
          <g fill="none" stroke="#c0161a" strokeWidth="2">
            <rect x="483" y="257" width="69" height="18" />
            <rect x="289" y="332" width="191" height="43" />
            <path d="M502.500 275C502.500 300 500 304 492 304H486C474 304 470 310 464 324" />
            <circle cx="554.500" cy="352.500" r="10.500" />
          </g>
          <path d="M461 331l-2-11 10 3z" fill="#c0161a" />
        </svg>
      </main>
    </div>
  );
}
